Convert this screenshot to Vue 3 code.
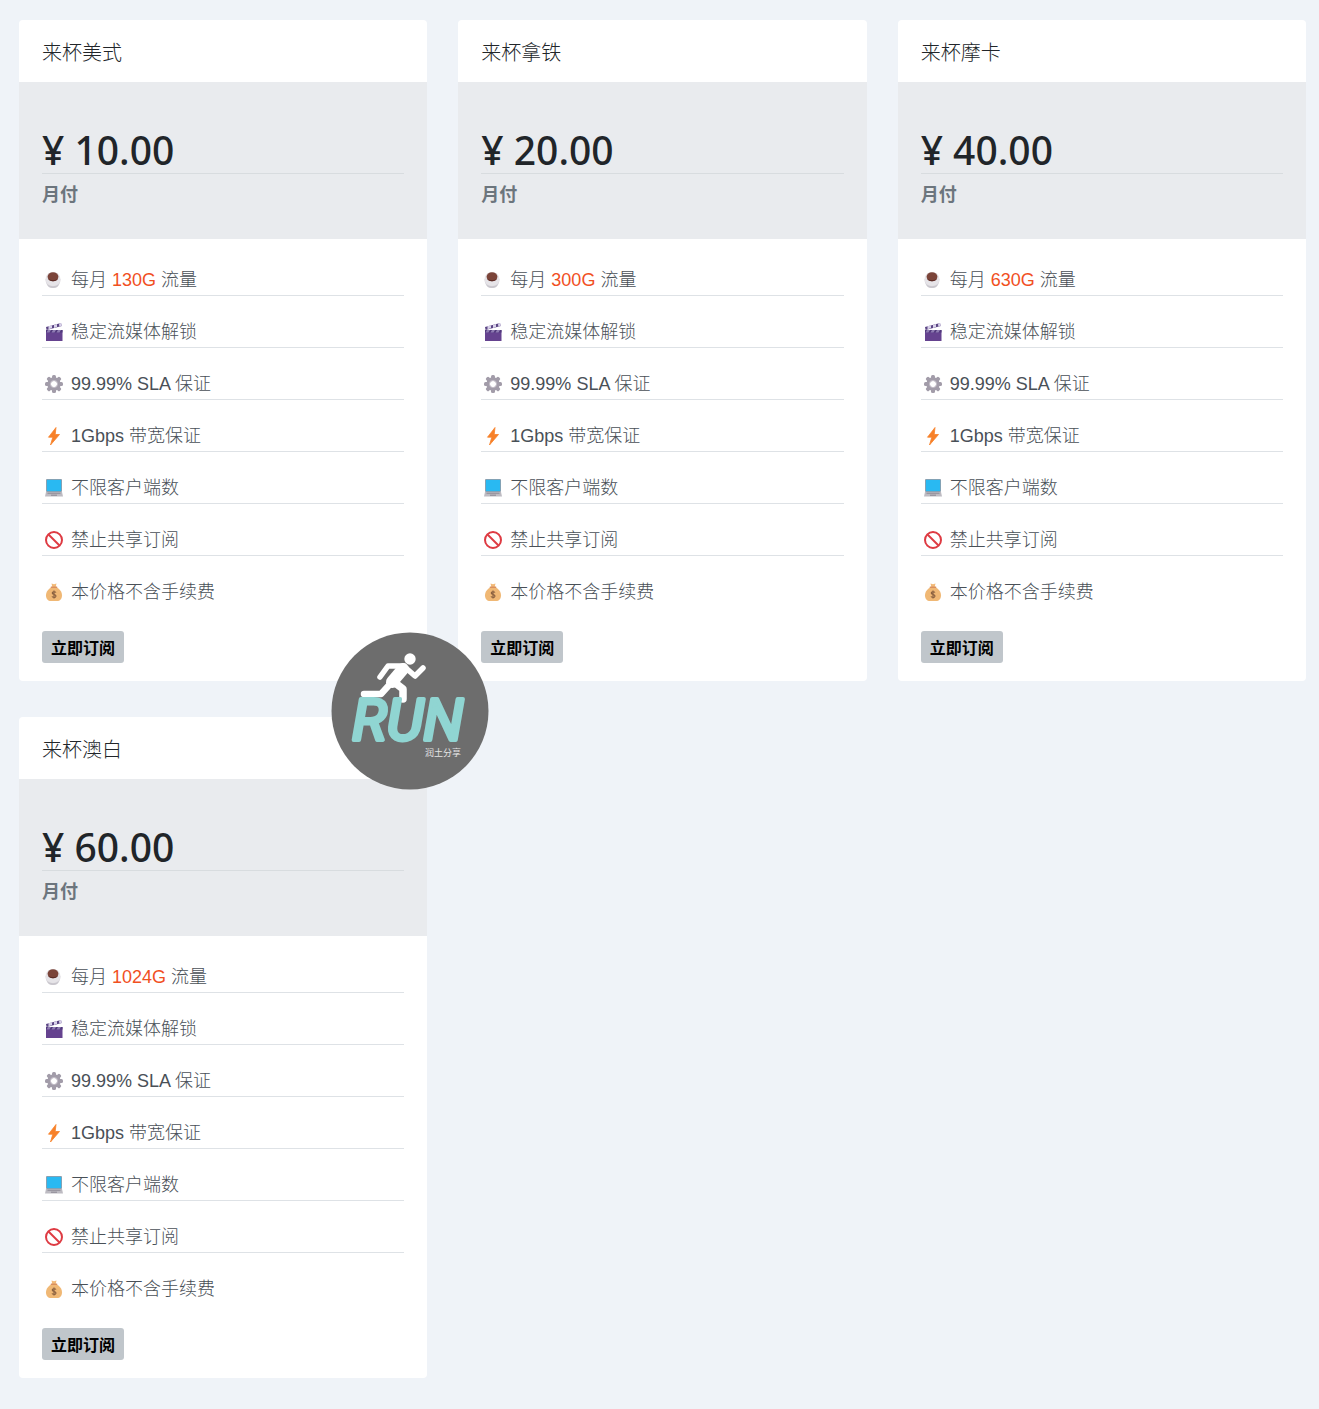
<script setup>
const plans = [
  { id: 1, name: "来杯美式", price: "10.00", traffic: "130G" },
  { id: 2, name: "来杯拿铁", price: "20.00", traffic: "300G" },
  { id: 3, name: "来杯摩卡", price: "40.00", traffic: "630G" },
  { id: 4, name: "来杯澳白", price: "60.00", traffic: "1024G" },
];

// 所有套餐共有的特性
const features = [
  { icon: "film", text: "稳定流媒体解锁" },
  { icon: "gear", text: "99.99% SLA 保证" },
  { icon: "bolt", text: "1Gbps 带宽保证" },
  { icon: "laptop", text: "不限客户端数" },
  { icon: "ban", text: "禁止共享订阅" },
  { icon: "money", text: "本价格不含手续费" },
];

const teeth = [0, 45, 90, 135, 180, 225, 270, 315];
</script>

<template>
  <main class="plans">
    <!-- 图标定义 -->
    <svg class="sprite" aria-hidden="true">
      <symbol id="icon-coffee" viewBox="0 0 24 24">
        <path d="M3.500 11c0 5.500 3 9 7.500 9s7.500-3.500 7.500-9z" fill="#d9d7dc" />
        <ellipse cx="11" cy="11" rx="7.500" ry="7" fill="#e6e4e8" />
        <path d="M5 16c3 3 9 3 12 0-1 3-3 4-6 4s-5-1-6-4z" fill="#c9c6cd" />
        <ellipse cx="11" cy="8.800" rx="5.400" ry="4.500" fill="#7b4439" />
        <path d="M6 10.500c2 2 8 2 10 0-1 3.600-9 3.600-10 0z" fill="#5c2c26" />
      </symbol>
      <symbol id="icon-film" viewBox="0 0 24 24">
        <path d="M4 10h16.500v11H4z" fill="#65428f" />
        <path d="M4 10h16.500v2.500H4z" fill="#51397c" />
        <path d="M4 7l15-4 .8 3L4.600 10z" fill="#5b4584" />
        <path d="M6.500 6.300l3.500-1 0 3-3.500 1zM12 4.900l3-.8 0 3-3 .8zM17 3.600l2-.6 .8 3-2.500 .6z" fill="#d9d2ea" />
        <path d="M6 10h3l-1.500 2.500H4.500zM11 10h3l-1.500 2.500h-3zM16 10h3l-1.500 2.500h-3z" fill="#8f7cb3" />
      </symbol>
      <symbol id="icon-gear" viewBox="0 0 24 24">
        <rect
          v-for="angle in teeth"
          :key="angle"
          x="10"
          y="3"
          width="4"
          height="5"
          rx="1.500"
          fill="#a29ca9"
          :transform="`rotate(${angle} 12 12)`"
        />
        <circle cx="12" cy="12" r="4.900" fill="none" stroke="#a29ca9" stroke-width="3.600" />
        <circle cx="12" cy="12" r="3.600" fill="none" stroke="#c8c3cd" stroke-width=".9" />
      </symbol>
      <symbol id="icon-bolt" viewBox="0 0 24 24">
        <path d="M14 3.500L6.500 13.200h4.300L8.500 21 17.500 10.500h-4.300z" fill="#f78129" stroke="#f78129" stroke-width=".8" stroke-linejoin="round" />
      </symbol>
      <symbol id="icon-laptop" viewBox="0 0 24 24">
        <rect x="4" y="3" width="16" height="13" rx="1" fill="#9a9da6" />
        <path d="M4.800 3.800h14.400v11.400H4.800z" fill="#29b9f2" />
        <path d="M4 16h16l1 4.500H3z" fill="#bdbbc2" />
        <path d="M5.500 17.200h13M9 19.200h6" stroke="#85828c" stroke-width=".9" />
      </symbol>
      <symbol id="icon-ban" viewBox="0 0 24 24">
        <circle cx="12" cy="12" r="8" fill="none" stroke="#de3b43" stroke-width="2" />
        <path d="M6.500 6.500l11 11" stroke="#de3b43" stroke-width="2" />
      </symbol>
      <symbol id="icon-money" viewBox="0 0 24 24">
        <path d="M9.500 3.500l2.500 .8 2.500-.8-.9 4h-3.200z" fill="#f2ba79" />
        <path d="M10 7h4c3.500 2 6 4.500 6 8.500 0 3.500-2 5.500-5 5.500H9c-3 0-5-2-5-5.500C4 11.500 6.500 9 10 7z" fill="#f0b875" />
        <path d="M9.300 7.200h5.400" stroke="#d9905f" stroke-width="1.400" stroke-linecap="round" />
        <path d="M14 12.500c-.6-1-3.800-1.200-3.800 .5 0 2 3.800 1 3.800 3s-3.400 1.800-4 .4M12 10.500v8" fill="none" stroke="#855c3d" stroke-width="1.100" />
      </symbol>
    </svg>

    <article v-for="plan in plans" :key="plan.id" class="card">
      <h2 class="card-title">{{ plan.name }}</h2>
      <div class="card-price">
        <div class="amount">¥ {{ plan.price }}</div>
        <div class="period">月付</div>
      </div>
      <div class="card-body">
        <ul class="features">
          <li class="feature">
            <svg class="icon" aria-hidden="true"><use href="#icon-coffee" /></svg>
            <span>每月 <span class="traffic">{{ plan.traffic }}</span> 流量</span>
          </li>
          <li v-for="item in features" :key="item.icon" class="feature">
            <svg class="icon" aria-hidden="true"><use :href="`#icon-${item.icon}`" /></svg>
            <span>{{ item.text }}</span>
          </li>
        </ul>
        <button type="button" class="subscribe">立即订阅</button>
      </div>
    </article>

    <!-- 悬浮水印 -->
    <svg class="watermark" viewBox="0 0 158 158" role="img" aria-label="RUN 润土分享">
      <circle cx="79" cy="79" r="78.500" fill="#6d6d6d" />
      <g fill="none" stroke="#fff" stroke-linecap="round" stroke-linejoin="round">
        <path d="M49 45L57 34H73" stroke-width="5.500" />
        <path d="M76 37L84 44 92 36" stroke-width="5.500" />
        <path d="M72 37L61 50" stroke-width="12" />
        <path d="M60 51L50 62H33" stroke-width="6.500" />
        <path d="M63 50L72 57V67" stroke-width="7.500" />
      </g>
      <circle cx="79" cy="27" r="5.700" fill="#fff" />
      <text class="logo-text" x="21" y="108">RUN</text>
      <text class="logo-caption" x="94" y="124">润土分享</text>
    </svg>
  </main>
</template>

<style>
body {
  margin: 0;
  background-color: #eff3f8;
}
</style>

<style scoped>
.plans {
  position: relative;
  display: grid;
  grid-template-columns: repeat(3, 1fr);
  gap: 36px 31px;
  padding: 20px 13px 30px 19px;
  font-family: "Liberation Sans", "Noto Sans CJK SC", sans-serif;
  color: #212529;
}

.sprite {
  position: absolute;
  width: 0;
  height: 0;
}

.card {
  background-color: #fff;
  border-radius: 4px;
  overflow: hidden;
}

.card-title {
  margin: 0;
  padding: 18px 23px 14px;
  font-size: 20px;
  line-height: 30px;
  font-weight: 300;
}

.card-price {
  padding: 44px 23px 29px;
  background-color: #e9ebee;
}

.amount {
  border-bottom: 1px solid #d8dcdf;
  font-family: "Noto Sans", "Open Sans", sans-serif;
  font-size: 39px;
  line-height: 47px;
  font-weight: 500;
}

.period {
  padding-top: 6px;
  font-size: 18px;
  line-height: 30px;
  font-weight: 700;
  color: #6c757d;
}

.card-body {
  padding: 5px 23px 18px;
}

.features {
  margin: 0 0 24px;
  padding: 0;
  list-style: none;
}

.feature {
  display: flex;
  align-items: center;
  gap: 5px;
  padding: 24px 0 3px;
  border-bottom: 1px solid #dee2e6;
  font-size: 18px;
  line-height: 24px;
  font-weight: 300;
  color: #495057;
}

.feature:last-child {
  border-bottom: 0;
}

.icon {
  flex: none;
  width: 24px;
  height: 24px;
}

.traffic {
  color: #f1501f;
}

.subscribe {
  display: block;
  height: 32px;
  padding: 0 9px;
  border: 0;
  border-radius: 3px;
  background-color: #c0c6cb;
  font-family: inherit;
  font-size: 16px;
  font-weight: 700;
  color: #000;
  cursor: pointer;
}

.watermark {
  position: absolute;
  top: 632px;
  left: 331px;
  width: 158px;
  height: 158px;
}

.logo-text {
  fill: #90d5d2;
  stroke: #90d5d2;
  stroke-width: 4px;
  stroke-linejoin: round;
  font-family: Roboto, sans-serif;
  font-size: 58px;
  font-style: italic;
  font-weight: 400;
}

.logo-caption {
  fill: #e4e4e4;
  font-family: "Noto Sans CJK SC", sans-serif;
  font-size: 9px;
}
</style>
